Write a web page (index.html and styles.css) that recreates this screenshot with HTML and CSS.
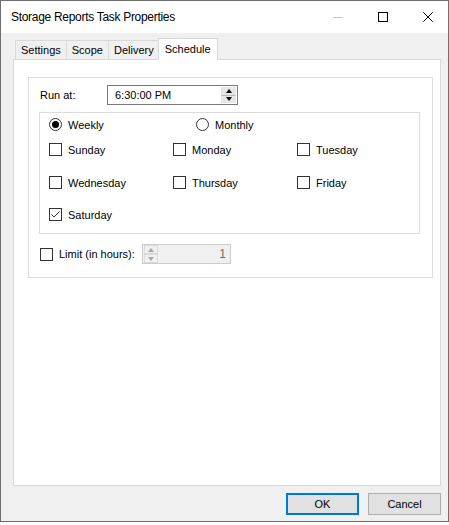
FILE: index.html
```html
<!DOCTYPE html>
<html>
<head>
<meta charset="utf-8">
<link rel="stylesheet" href="styles.css">
</head>
<body>
<div class="window">
  <div class="titlebar">
    <span class="title">Storage Reports Task Properties</span>
    <div class="caption">
      <span class="cap"><svg width="10" height="10" viewBox="0 0 10 10"><line x1="0" y1="5.5" x2="10" y2="5.5" stroke="#c2c2c2" stroke-width="1"/></svg></span>
      <span class="cap"><svg width="10" height="10" viewBox="0 0 10 10"><rect x="0.5" y="0.5" width="9" height="9" fill="none" stroke="#000" stroke-width="1"/></svg></span>
      <span class="cap"><svg width="10" height="10" viewBox="0 0 10 10"><path d="M0.3 0.3 L9.7 9.7 M9.7 0.3 L0.3 9.7" stroke="#000" stroke-width="1"/></svg></span>
    </div>
  </div>
  <div class="body">
    <div class="tabs">
      <div class="tab">Settings</div>
      <div class="tab">Scope</div>
      <div class="tab">Delivery</div>
      <div class="tab active">Schedule</div>
    </div>
    <div class="panel">
      <div class="group outer">
        <div class="run-row">
          <span class="run-label">Run at:</span>
          <div class="timefield">
            <span class="time-val">6:30:00 PM</span>
            <div class="spin">
              <span class="spin-btn"><span class="arrow up"></span></span>
              <span class="spin-btn"><span class="arrow down"></span></span>
            </div>
          </div>
        </div>
        <div class="group inner">
          <div class="radio-row">
            <div class="opt weekly"><span class="radio checked"></span><span>Weekly</span></div>
            <div class="opt"><span class="radio"></span><span>Monthly</span></div>
          </div>
          <div class="days">
            <div class="opt"><span class="check"></span><span>Sunday</span></div>
            <div class="opt"><span class="check"></span><span>Monday</span></div>
            <div class="opt"><span class="check"></span><span>Tuesday</span></div>
            <div class="opt"><span class="check"></span><span>Wednesday</span></div>
            <div class="opt"><span class="check"></span><span>Thursday</span></div>
            <div class="opt"><span class="check"></span><span>Friday</span></div>
            <div class="opt"><span class="check checked"><svg width="11" height="11" viewBox="0 0 11 11"><polyline points="1.5,5.5 4,8 9.5,2.5" fill="none" stroke="#333" stroke-width="1"/></svg></span><span>Saturday</span></div>
          </div>
        </div>
        <div class="limit-row">
          <div class="opt limit"><span class="check"></span><span>Limit (in hours):</span></div>
          <div class="numfield">
            <div class="spin disabled">
              <span class="spin-btn"><span class="arrow up"></span></span>
              <span class="spin-btn"><span class="arrow down"></span></span>
            </div>
            <span class="num-val">1</span>
          </div>
        </div>
      </div>
    </div>
    <div class="buttons">
      <div class="btn default">OK</div>
      <div class="btn">Cancel</div>
    </div>
  </div>
</div>
</body>
</html>
```

FILE: styles.css
```css
html, body {
  margin: 0;
  padding: 0;
  background: #ffffff;
}

body {
  font-family: "Liberation Sans", Arial, sans-serif;
  font-size: 11px;
  color: #000;
}

.window {
  width: 449px;
  height: 522px;
  box-sizing: border-box;
  border: 1px solid #6e6e6e;
  background: #f0f0f0;
  display: flex;
  flex-direction: column;
}

.titlebar {
  height: 32px;
  flex: none;
  background: #ffffff;
  display: flex;
  align-items: center;
  justify-content: space-between;
  padding-left: 10px;
}

.title {
  font-size: 12px;
  letter-spacing: -0.3px;
  color: #000;
}

.caption {
  display: flex;
  align-items: center;
  gap: 35px;
  padding-right: 15px;
}

.cap {
  width: 10px;
  height: 10px;
  display: block;
}

.cap svg {
  display: block;
}

.body {
  flex: 1;
  display: flex;
  flex-direction: column;
  padding: 5px 7px 0 12px;
}

.tabs {
  height: 21px;
  display: flex;
  align-items: flex-end;
  padding-left: 2px;
  position: relative;
  z-index: 1;
}

.tab {
  height: 19px;
  box-sizing: border-box;
  border: 1px solid #d9d9d9;
  border-bottom: none;
  background: #f0f0f0;
  padding: 0 5px;
  line-height: 19px;
  margin-left: -1px;
}

.tab:first-child {
  margin-left: 0;
}

.tab.active {
  height: 22px;
  margin-bottom: -1px;
  margin-left: -2px;
  background: #ffffff;
  line-height: 20px;
  padding: 0 6px;
}

.panel {
  height: 427px;
  box-sizing: border-box;
  border: 1px solid #d9d9d9;
  background: #ffffff;
  padding: 17px 7px 0 14px;
}

.group {
  border: 1px solid #dcdcdc;
  background: #ffffff;
}

.outer {
  padding: 7px 12px 13px 10px;
}

.run-row {
  display: flex;
  align-items: center;
  height: 20px;
}

.run-label {
  width: 68px;
  padding-left: 1px;
  box-sizing: border-box;
}

.timefield {
  width: 131px;
  height: 20px;
  box-sizing: border-box;
  border: 1px solid #7a7a7a;
  background: #fff;
  display: flex;
  align-items: center;
  justify-content: space-between;
  padding: 1px 1px 1px 7px;
}

.spin {
  width: 15px;
  height: 16px;
  display: flex;
  flex-direction: column;
  gap: 0;
}

.spin-btn {
  flex: 1;
  background: #e6e6e6;
  border: 1px solid #e6e6e6;
  display: flex;
  align-items: center;
  justify-content: center;
}

.spin-btn + .spin-btn {
  border-top-color: #b9b9b9;
}

.arrow {
  width: 0;
  height: 0;
  border-left: 3.5px solid transparent;
  border-right: 3.5px solid transparent;
}

.arrow.up {
  border-bottom: 4px solid #000;
}

.arrow.down {
  border-top: 4px solid #000;
}

.inner {
  margin-top: 7px;
  padding: 5px 0 12px 9px;
}

.opt {
  display: flex;
  align-items: center;
  height: 13px;
  gap: 6px;
  white-space: nowrap;
}

.radio-row {
  display: flex;
  height: 13px;
}

.weekly {
  width: 147px;
}

.radio {
  width: 13px;
  height: 13px;
  box-sizing: border-box;
  border: 1px solid #333;
  border-radius: 50%;
  background: #fff;
  display: flex;
  align-items: center;
  justify-content: center;
  flex: none;
}

.radio.checked::after {
  content: "";
  width: 7px;
  height: 7px;
  border-radius: 50%;
  background: #000;
}

.check {
  width: 13px;
  height: 13px;
  box-sizing: border-box;
  border: 1px solid #333;
  background: #fff;
  flex: none;
}

.check svg {
  display: block;
}

.days {
  margin-top: 12px;
  display: grid;
  grid-template-columns: 124px 124px 124px;
  grid-template-rows: 33px 32px 13px;
}

.limit-row {
  margin-top: 10px;
  display: flex;
  align-items: center;
  height: 20px;
}

.limit {
  width: 103px;
  padding-left: 1px;
  box-sizing: border-box;
}

.numfield {
  width: 89px;
  height: 20px;
  box-sizing: border-box;
  border: 1px solid #cccccc;
  background: #f0f0f0;
  display: flex;
  align-items: center;
  justify-content: space-between;
  padding: 0 4px 0 1px;
}

.spin.disabled {
  width: 14px;
  height: 18px;
}

.spin.disabled .spin-btn {
  background: #f0f0f0;
  border: 1px solid #dadada;
}

.spin.disabled .arrow.up {
  border-bottom-color: #a6a6a6;
}

.spin.disabled .arrow.down {
  border-top-color: #a6a6a6;
}

.num-val {
  color: #6d6d6d;
  font-size: 12px;
}

.buttons {
  margin-top: 7px;
  display: flex;
  justify-content: flex-end;
  gap: 9px;
}

.btn {
  width: 73px;
  height: 22px;
  box-sizing: border-box;
  border: 1px solid #adadad;
  background: #e1e1e1;
  display: flex;
  align-items: center;
  justify-content: center;
}

.btn.default {
  border: 2px solid #0078d7;
}
```
